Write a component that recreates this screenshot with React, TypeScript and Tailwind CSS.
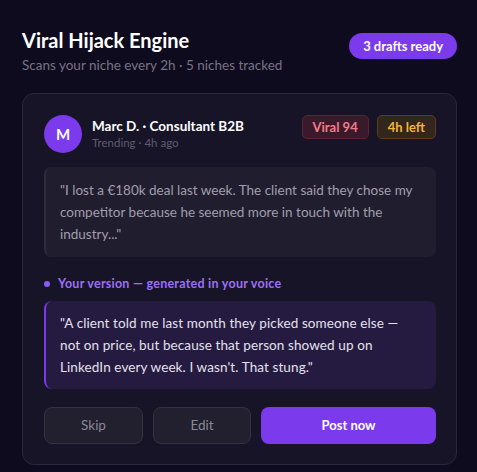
import React from 'react';

// Draft card shown in the Viral Hijack Engine panel
const draft = {
  initial: 'M',
  author: 'Marc D. · Consultant B2B',
  meta: 'Trending · 4h ago',
  score: 94,
  timeLeft: '4h left',
  original: [
    '"I lost a €180k deal last week. The client said they chose my',
    'competitor because he seemed more in touch with the',
    'industry..."',
  ],
  rewrite: [
    '"A client told me last month they picked someone else —',
    'not on price, but because that person showed up on',
    'LinkedIn every week. I wasn\'t. That stung."',
  ],
};

// Keeps the line breaks of the original layout
const Lines = ({ lines }: { lines: string[] }) => (
  <>
    {lines.map((line, i) => (
      <span key={i} className="block whitespace-nowrap">
        {line}
      </span>
    ))}
  </>
);

export default function App() {
  return (
    <main className="min-h-[472px] w-[477px] bg-[#0f0b1e] pl-[22px] pr-[20px] pt-[28px] pb-[7px] font-['Lato','Liberation_Sans',sans-serif]">
      {/* Header */}
      <div className="flex items-start justify-between">
        <div>
          <h1 className="text-[20px] font-bold leading-[24px] text-white">Viral Hijack Engine</h1>
          <p className="mt-[4px] text-[13.5px] leading-[18px] text-[#777385]">
            Scans your niche every 2h · 5 niches tracked
          </p>
        </div>
        <span className="mt-[5px] rounded-full bg-[#7c3aed] px-[14px] py-[4px] text-[13px] font-bold leading-[18px] text-white">
          3 drafts ready
        </span>
      </div>

      {/* Draft card */}
      <div className="mt-[19px] rounded-[12px] border border-[#2a2640] bg-[#171428] pl-[21px] pr-[20px] pt-[21px] pb-[20px]">
        <div className="flex items-start justify-between">
          <div className="flex items-center gap-[10px]">
            <div className="flex h-[38px] w-[38px] items-center justify-center rounded-full bg-[#7c3aed] text-[15px] font-bold text-white">
              {draft.initial}
            </div>
            <div>
              <p className="text-[13.5px] font-bold leading-[18px] text-white">{draft.author}</p>
              <p className="text-[11.5px] leading-[16px] text-[#5f5b70]">{draft.meta}</p>
            </div>
          </div>
          <div className="flex gap-[8px]">
            <span className="rounded-[5px] border border-[#5a2434] bg-[#3a1a2a] px-[10px] py-[2px] text-[13px] font-bold leading-[18px] text-[#f47a8a]">
              Viral {draft.score}
            </span>
            <span className="rounded-[5px] border border-[#5a3e1e] bg-[#33261c] px-[10px] py-[2px] text-[13px] font-bold leading-[18px] text-[#f5b43a]">
              {draft.timeLeft}
            </span>
          </div>
        </div>

        {/* Original post */}
        <div className="mt-[14px] rounded-[8px] border-l-2 border-[#2e2b3c] bg-[#201d2f] py-[12px] pl-[14px] pr-[8px] text-[13.5px] leading-[22px] text-[#a09dac]">
          <Lines lines={draft.original} />
        </div>

        {/* Generated version */}
        <div className="mt-[19px] flex items-center gap-[8px]">
          <span className="h-[6px] w-[6px] rounded-full bg-[#8b5cf6]" />
          <span className="text-[12.5px] font-bold leading-[16px] tracking-[0.25px] text-[#9d6ff5]">
            Your version — generated in your voice
          </span>
        </div>
        <div className="mt-[9px] rounded-[8px] border-l-2 border-[#7c3aed] bg-[#251b40] py-[11px] pl-[14px] pr-[8px] text-[13.5px] leading-[22px] tracking-[0.1px] text-[#e4e1ee]">
          <Lines lines={draft.rewrite} />
        </div>

        {/* Actions */}
        <div className="mt-[18px] flex gap-[10px]">
          <button className="h-[37px] w-[99px] rounded-[8px] border border-[#35323f] bg-[#221f2e] text-[13.5px] text-[#8b8898]">
            Skip
          </button>
          <button className="h-[37px] w-[98px] rounded-[8px] border border-[#35323f] bg-[#221f2e] text-[13.5px] text-[#8b8898]">
            Edit
          </button>
          <button className="h-[37px] flex-1 rounded-[8px] bg-[#7c3aed] text-[13px] font-bold text-white">
            Post now
          </button>
        </div>
      </div>
    </main>
  );
}
